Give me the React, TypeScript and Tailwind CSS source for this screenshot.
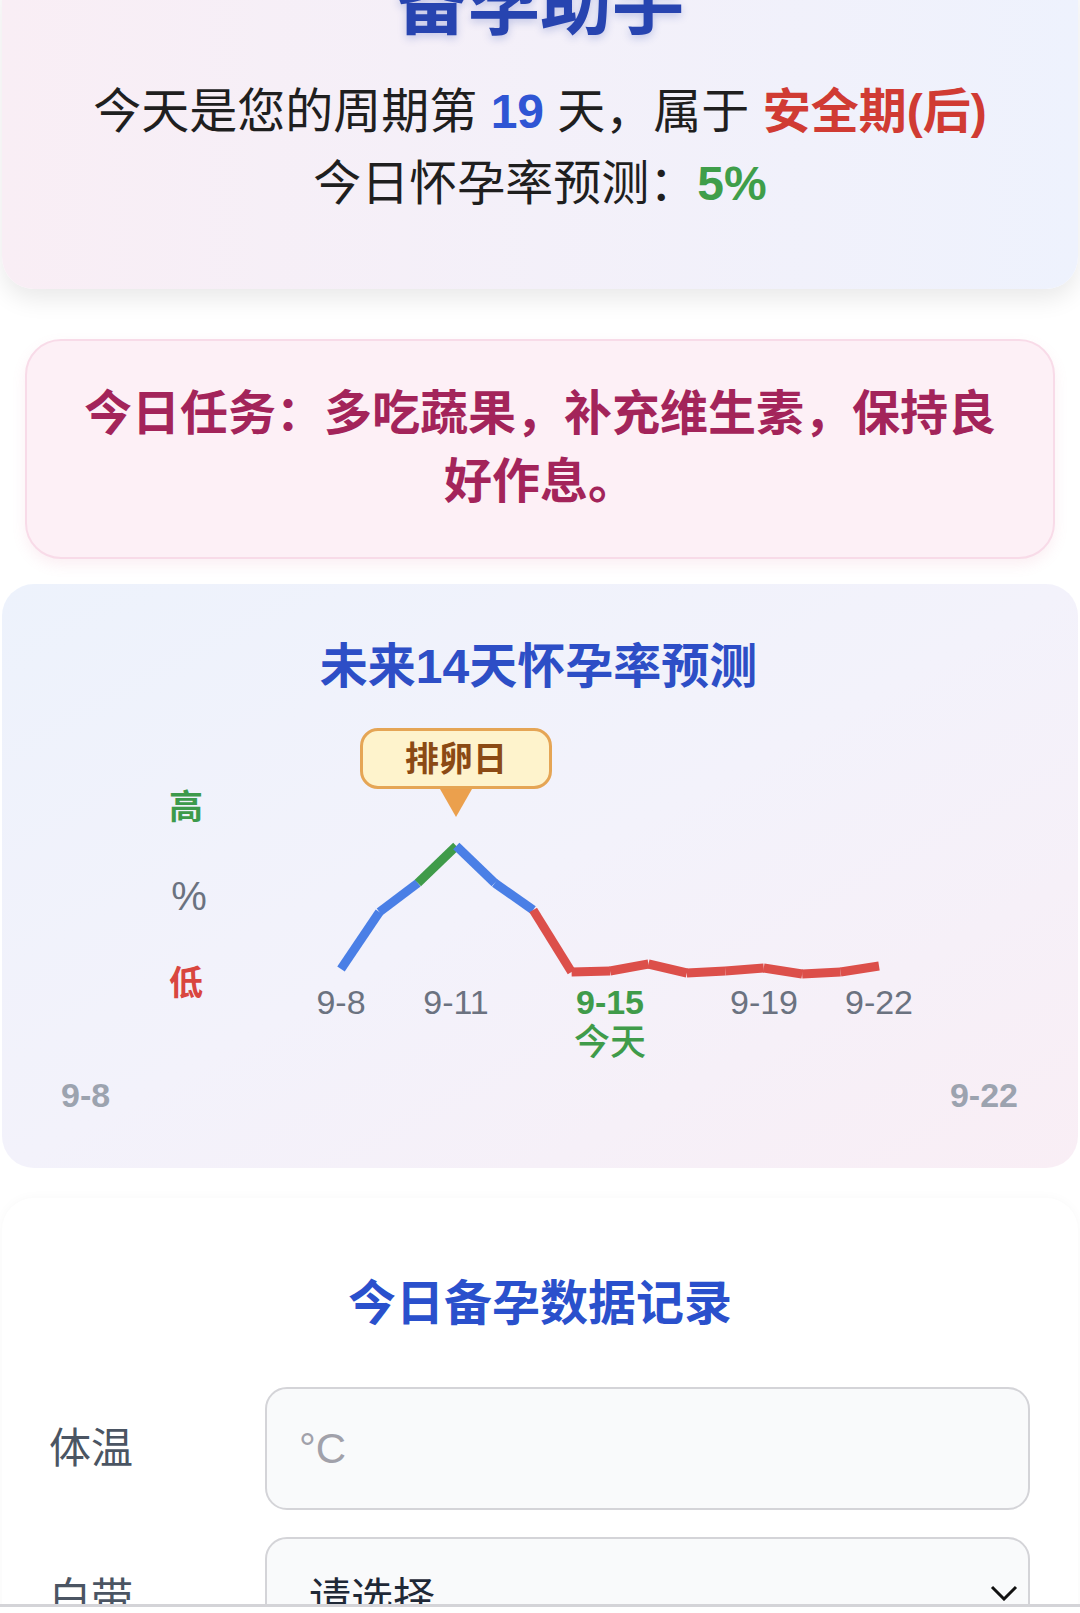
import React from "react";

const font = "font-['Liberation_Sans','Noto_Sans_CJK_SC',sans-serif]";

// fertility curve, y in px inside the chart canvas
const points = [266, 209, 180, 143, 180, 207, 269, 268, 261, 270, 268, 265, 271, 269, 263];
const x0 = 339;
const dx = 38.43;

const segColor = (i: number) => {
  if (i === 2) return "#3f9b4a";
  if (i >= 5) return "#dc4f4a";
  return "#4a7fe6";
};

const HeaderCard = () => (
  <div className="mx-[2px] -mt-[33px] rounded-[32px] bg-linear-to-r from-[#f9eef5] to-[#eef2fd] pb-[69px] shadow-[0_10px_24px_rgba(0,0,0,0.09)]">
    <h1 className="text-center text-[72px] font-bold leading-[72px] text-[#2744b0] [text-shadow:0_3px_8px_rgba(39,68,176,0.25)]">
      备孕助手
    </h1>
    <div className="mt-[37px] text-center text-[48px] leading-[72px] text-[#1f1f1f]">
      <p>
        今天是您的周期第 <span className="font-bold text-[#2f55d4]">19</span> 天，属于{" "}
        <span className="font-bold text-[#d03b33]">安全期(后)</span>
      </p>
      <p>
        今日怀孕率预测：<span className="font-bold text-[#3f9e4a]">5%</span>
      </p>
    </div>
  </div>
);

const TaskCard = () => (
  <div className="mx-[25px] mt-[50px] rounded-[36px] border-2 border-[#f8dbe8] bg-[#fdf0f6] px-[40px] pt-[39px] pb-[41px] shadow-[0_6px_14px_rgba(220,120,160,0.12)]">
    <p className="text-center text-[48px] font-bold leading-[68px] text-[#a3245a]">
      今日任务：多吃蔬果，补充维生素，保持良好作息。
    </p>
  </div>
);

const ChartCard = () => (
  <div className="mx-[2px] mt-[25px] rounded-[32px] bg-linear-to-br from-[#edf2fc] via-[#f3f2fb] to-[#f9eef5] pl-[59px] pr-[62px] pt-[47px] pb-[53px]">
    <h2 className="text-center text-[48px] font-bold leading-[72px] text-[#2d4ec6]">未来14天怀孕率预测</h2>
    <div className="relative -ml-[59px] -mr-[62px] h-[372px]">
      <svg className="absolute inset-0" width="1076" height="372" viewBox="0 0 1076 372">
        <polygon points="438,86 470,86 454,114" fill="#eba04d" />
        {points.slice(0, -1).map((y, i) => (
          <line
            key={i}
            x1={x0 + i * dx}
            y1={y}
            x2={x0 + (i + 1) * dx}
            y2={points[i + 1]}
            stroke={segColor(i)}
            strokeWidth={9}
            strokeLinecap="butt"
          />
        ))}
      </svg>

      <div className="absolute left-[358px] top-[25px] flex h-[61px] w-[192px] items-center justify-center rounded-[18px] border-[3px] border-[#e5a555] bg-[#fef3cc]">
        <span className="text-[34px] font-bold leading-none text-[#8b4a14]">排卵日</span>
      </div>

      <span className="absolute left-[184px] top-[104px] -translate-x-1/2 -translate-y-1/2 text-[34px] font-bold leading-none text-[#3d9a4b]">高</span>
      <span className="absolute left-[187px] top-[193px] -translate-x-1/2 -translate-y-1/2 text-[40px] leading-none text-[#6b7280]">%</span>
      <span className="absolute left-[184px] top-[280px] -translate-x-1/2 -translate-y-1/2 text-[34px] font-bold leading-none text-[#d9463f]">低</span>

      <span className="absolute left-[339px] top-[299px] -translate-x-1/2 -translate-y-1/2 text-[34px] leading-none text-[#6b7280]">9-8</span>
      <span className="absolute left-[454px] top-[299px] -translate-x-1/2 -translate-y-1/2 text-[34px] leading-none text-[#6b7280]">9-11</span>
      <span className="absolute left-[608px] top-[299px] -translate-x-1/2 -translate-y-1/2 text-[34px] font-bold leading-none text-[#3f9b4a]">9-15</span>
      <span className="absolute left-[608px] top-[340px] -translate-x-1/2 -translate-y-1/2 text-[36px] font-medium leading-none text-[#3f9b4a]">今天</span>
      <span className="absolute left-[762px] top-[299px] -translate-x-1/2 -translate-y-1/2 text-[34px] leading-none text-[#6b7280]">9-19</span>
      <span className="absolute left-[877px] top-[299px] -translate-x-1/2 -translate-y-1/2 text-[34px] leading-none text-[#6b7280]">9-22</span>
    </div>
    <div className="flex justify-between text-[34px] font-bold leading-[40px] text-[#9ca3af]">
      <span>9-8</span>
      <span className="-mr-[2px]">9-22</span>
    </div>
  </div>
);

const RecordCard = () => (
  <div className="mx-[2px] mt-[30px] rounded-[32px] bg-white pt-[70px] pb-[40px] shadow-[0_0_12px_rgba(0,0,0,0.03)]">
    <h2 className="text-center text-[48px] font-bold leading-[72px] text-[#2a50cc]">今日备孕数据记录</h2>
    <div className="mt-[47px] flex flex-col gap-[27px] pl-[47px] pr-[48px]">
      <div className="flex items-center">
        <label className="w-[216px] shrink-0 text-[42px] leading-none text-[#4b5563]">体温</label>
        <div className="flex h-[123px] flex-1 items-center rounded-[22px] border-2 border-[#d4d4d8] bg-[#f9fafb] pl-[32px]">
          <span className="text-[42px] leading-none text-[#a1a1aa]">°C</span>
        </div>
      </div>
      <div className="flex items-center">
        <label className="w-[216px] shrink-0 text-[42px] leading-none text-[#4b5563]">白带</label>
        <div className="flex h-[123px] flex-1 items-center justify-between rounded-[22px] border-2 border-[#d4d4d8] bg-[#f9fafb] pl-[42px] pr-[10px]">
          <span className="text-[42px] leading-none text-[#1f2937]">请选择</span>
          <svg width="28" height="16" viewBox="0 0 28 16" className="-translate-y-[6px]">
            <polyline points="2,2 14,14 26,2" fill="none" stroke="#111" strokeWidth="3" />
          </svg>
        </div>
      </div>
    </div>
  </div>
);

export default function App() {
  return (
    <div className={`relative h-[1613px] w-[1080px] overflow-hidden bg-white ${font}`}>
      <HeaderCard />
      <TaskCard />
      <ChartCard />
      <RecordCard />
      <div className="absolute bottom-0 left-0 right-0 h-[9px] border-t-[3px] border-[#d4d4d8] bg-white" />
    </div>
  );
}
